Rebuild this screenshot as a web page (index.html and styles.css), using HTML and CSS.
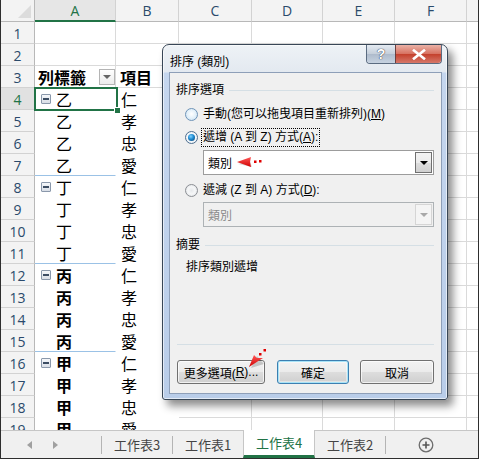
FILE: index.html
```html
<!DOCTYPE html>
<html>
<head>
<meta charset="utf-8">
<link rel="stylesheet" href="styles.css">
</head>
<body>
<div class="app">
  <div class="sheet">
    <div class="row hdr">
      <div class="c rn corner"><span class="tri"></span></div>
      <div class="c ca hsel">A</div>
      <div class="c cb">B</div>
      <div class="c cc">C</div>
      <div class="c cd">D</div>
      <div class="c ce">E</div>
      <div class="c cf">F</div>
      <div class="c cg"></div>
    </div>
    <div class="row"><div class="c rn">1</div><div class="c ca"></div><div class="c cb"></div><div class="c cc"></div><div class="c cd"></div><div class="c ce"></div><div class="c cf"></div><div class="c cg"></div></div>
    <div class="row"><div class="c rn">2</div><div class="c ca"></div><div class="c cb"></div><div class="c cc"></div><div class="c cd"></div><div class="c ce"></div><div class="c cf"></div><div class="c cg"></div></div>
    <div class="row"><div class="c rn">3</div><div class="c ca ph"><span class="pht">列標籤</span><span class="filt"><span class="ftri"></span></span></div><div class="c cb ph"><span class="pht">項目</span></div><div class="c cc"></div><div class="c cd"></div><div class="c ce"></div><div class="c cf"></div><div class="c cg"></div></div>
    <div class="row"><div class="c rn rsel">4</div><div class="c ca pv"><span class="mb"></span><span class="lbl">乙</span></div><div class="c cb pv"><span class="val">仁</span></div><div class="c cc"></div><div class="c cd"></div><div class="c ce"></div><div class="c cf"></div><div class="c cg"></div></div>
    <div class="row"><div class="c rn">5</div><div class="c ca pv"><span class="lbl">乙</span></div><div class="c cb pv"><span class="val">孝</span></div><div class="c cc"></div><div class="c cd"></div><div class="c ce"></div><div class="c cf"></div><div class="c cg"></div></div>
    <div class="row"><div class="c rn">6</div><div class="c ca pv"><span class="lbl">乙</span></div><div class="c cb pv"><span class="val">忠</span></div><div class="c cc"></div><div class="c cd"></div><div class="c ce"></div><div class="c cf"></div><div class="c cg"></div></div>
    <div class="row"><div class="c rn">7</div><div class="c ca pv gend"><span class="lbl">乙</span></div><div class="c cb pv"><span class="val">愛</span></div><div class="c cc"></div><div class="c cd"></div><div class="c ce"></div><div class="c cf"></div><div class="c cg"></div></div>
    <div class="row"><div class="c rn">8</div><div class="c ca pv"><span class="mb"></span><span class="lbl">丁</span></div><div class="c cb pv"><span class="val">仁</span></div><div class="c cc"></div><div class="c cd"></div><div class="c ce"></div><div class="c cf"></div><div class="c cg"></div></div>
    <div class="row"><div class="c rn">9</div><div class="c ca pv"><span class="lbl">丁</span></div><div class="c cb pv"><span class="val">孝</span></div><div class="c cc"></div><div class="c cd"></div><div class="c ce"></div><div class="c cf"></div><div class="c cg"></div></div>
    <div class="row"><div class="c rn">10</div><div class="c ca pv"><span class="lbl">丁</span></div><div class="c cb pv"><span class="val">忠</span></div><div class="c cc"></div><div class="c cd"></div><div class="c ce"></div><div class="c cf"></div><div class="c cg"></div></div>
    <div class="row"><div class="c rn">11</div><div class="c ca pv gend"><span class="lbl">丁</span></div><div class="c cb pv"><span class="val">愛</span></div><div class="c cc"></div><div class="c cd"></div><div class="c ce"></div><div class="c cf"></div><div class="c cg"></div></div>
    <div class="row"><div class="c rn">12</div><div class="c ca pv"><span class="mb"></span><span class="lbl b">丙</span></div><div class="c cb pv"><span class="val">仁</span></div><div class="c cc"></div><div class="c cd"></div><div class="c ce"></div><div class="c cf"></div><div class="c cg"></div></div>
    <div class="row"><div class="c rn">13</div><div class="c ca pv"><span class="lbl b">丙</span></div><div class="c cb pv"><span class="val">孝</span></div><div class="c cc"></div><div class="c cd"></div><div class="c ce"></div><div class="c cf"></div><div class="c cg"></div></div>
    <div class="row"><div class="c rn">14</div><div class="c ca pv"><span class="lbl b">丙</span></div><div class="c cb pv"><span class="val">忠</span></div><div class="c cc"></div><div class="c cd"></div><div class="c ce"></div><div class="c cf"></div><div class="c cg"></div></div>
    <div class="row"><div class="c rn">15</div><div class="c ca pv gend"><span class="lbl b">丙</span></div><div class="c cb pv"><span class="val">愛</span></div><div class="c cc"></div><div class="c cd"></div><div class="c ce"></div><div class="c cf"></div><div class="c cg"></div></div>
    <div class="row"><div class="c rn">16</div><div class="c ca pv"><span class="mb"></span><span class="lbl b">甲</span></div><div class="c cb pv"><span class="val">仁</span></div><div class="c cc"></div><div class="c cd"></div><div class="c ce"></div><div class="c cf"></div><div class="c cg"></div></div>
    <div class="row"><div class="c rn">17</div><div class="c ca pv"><span class="lbl b">甲</span></div><div class="c cb pv"><span class="val">孝</span></div><div class="c cc"></div><div class="c cd"></div><div class="c ce"></div><div class="c cf"></div><div class="c cg"></div></div>
    <div class="row"><div class="c rn">18</div><div class="c ca pv"><span class="lbl b">甲</span></div><div class="c cb pv"><span class="val">忠</span></div><div class="c cc"></div><div class="c cd"></div><div class="c ce"></div><div class="c cf"></div><div class="c cg"></div></div>
    <div class="row"><div class="c rn">19</div><div class="c ca pv"><span class="lbl b">甲</span></div><div class="c cb pv"><span class="val">愛</span></div><div class="c cc"></div><div class="c cd"></div><div class="c ce"></div><div class="c cf"></div><div class="c cg"></div></div>
    <div class="selbox"><span class="fill"></span></div>
  </div>

  <div class="tabs">
    <div class="nav">
      <span class="navl"></span>
      <span class="navr"></span>
    </div>
    <div class="tsep"></div>
    <div class="tab t3">工作表3</div>
    <div class="tsep"></div>
    <div class="tab t1">工作表1</div>
    <div class="tab active">工作表4</div>
    <div class="tab t2">工作表2</div>
    <div class="tsep"></div>
    <div class="plus">
      <svg width="16" height="16" viewBox="0 0 16 16"><circle cx="8" cy="8" r="6.8" fill="none" stroke="#6d6d6d" stroke-width="1.3"/><path d="M8 4.5v7M4.5 8h7" stroke="#555" stroke-width="1.6"/></svg>
    </div>
  </div>

  <div class="dialog">
    <div class="titlebar">
      <span class="title">排序 (類別)</span>
      <div class="tbtns">
        <span class="help">?</span>
        <span class="close"><svg width="14" height="11" viewBox="0 0 14 11"><path d="M2 1.5 L12 9.5 M12 1.5 L2 9.5" stroke="#fff" stroke-width="2.6" stroke-linecap="square"/></svg></span>
      </div>
    </div>
    <div class="client">
      <div class="grp"><span>排序選項</span><span class="gline"></span></div>
      <div class="opt o1"><span class="radio hot"></span><span class="otext">手動(您可以拖曳項目重新排列)(<u>M</u>)</span></div>
      <div class="opt o2"><span class="radio on"></span><span class="otext focus">遞增 (A 到 Z) 方式(<u>A</u>):</span></div>
      <div class="combo"><span class="ctext">類別</span><span class="cbtn"><span class="ctri"></span></span></div>
      <div class="opt o3"><span class="radio"></span><span class="otext">遞減 (Z 到 A) 方式(<u>D</u>):</span></div>
      <div class="combo dis"><span class="ctext">類別</span><span class="cbtn"><span class="ctri"></span></span></div>
      <div class="grp g2"><span>摘要</span><span class="gline"></span></div>
      <div class="summary">排序類別遞增</div>
      <div class="spacer"></div>
      <div class="bsep"></div>
      <div class="btns">
        <span class="btn bmore">更多選項(<u>R</u>)...</span>
        <span class="btn bok">確定</span>
        <span class="btn bcancel">取消</span>
      </div>
      <svg class="arrow a1" width="30" height="20" viewBox="0 0 30 20">
        <defs><linearGradient id="rg" x1="0" y1="0" x2="0" y2="1"><stop offset="0" stop-color="#ff5a5a"/><stop offset="1" stop-color="#d00000"/></linearGradient></defs>
        <path d="M4 12 L18 15 L16 9 Z" fill="#000" opacity="0.15"/>
        <path d="M3 10 L17 5 L16 10 L17 15 Z" fill="url(#rg)"/>
        <rect x="20" y="8.5" width="2.5" height="2.5" fill="#e00000"/>
        <rect x="25" y="8" width="2.5" height="2.5" fill="#e00000"/>
      </svg>
      <svg class="arrow a2" width="26" height="26" viewBox="0 0 26 26">
        <path d="M5 22 L11 10 L18 18 Z" fill="#000" opacity="0.18"/>
        <path d="M3 21 L8 9 L11 12 L17 12 Z" fill="url(#rg)"/>
        <rect x="13" y="7" width="2.5" height="2.5" fill="#e00000"/>
        <rect x="17.5" y="3" width="2.5" height="2.5" fill="#e00000"/>
      </svg>
    </div>
  </div>
</div>
</body>
</html>
```

FILE: styles.css
```css
* { box-sizing: border-box; }
html, body { margin: 0; padding: 0; }
body {
  width: 479px; height: 459px; overflow: hidden; background: #fff;
  font-family: "Liberation Sans", "Noto Sans CJK TC", sans-serif;
}
.app {
  position: relative; width: 479px; height: 459px;
  border: 1px solid #2e2e2e; border-top: none;
  display: flex; flex-direction: column; background: #fff;
}
.sheet { position: relative; height: 430px; flex: none; overflow: hidden; }
.row { display: flex; height: 22px; flex: none; }
.c {
  flex: none; height: 22px;
  border-right: 1px solid #dadada; border-bottom: 1px solid #dadada;
  display: flex; align-items: center;
}
.rn {
  width: 34px; background: #f3f3f3;
  border-right-color: #b8b8b8; border-bottom-color: #d2d2d2;
  justify-content: center; font-family: "Open Sans", "Liberation Sans", sans-serif;
  font-size: 14px; color: #2a4a6b; padding-top: 1px;
}
.ca { width: 81px; }
.cb { width: 63px; }
.cc { width: 73px; }
.cd { width: 71px; }
.ce { width: 72px; }
.cf { width: 72px; }
.cg { flex: 1; border-right: none; }
.hdr .c {
  background: #f3f3f3; border-bottom-color: #b8b8b8; border-right-color: #d2d2d2;
  justify-content: center; font-family: "Open Sans", "Liberation Sans", sans-serif;
  font-size: 14px; color: #2a4a6b;
}
.hdr .rn { border-right-color: #b8b8b8; position: relative; }
.hdr .hsel { background: #e6e6e6; color: #217346; border-bottom: 2px solid #217346; }
.rn.rsel { background: #e1e1e1; color: #217346; }
.tri {
  position: absolute; right: 3px; bottom: 3px; width: 0; height: 0;
  border-left: 13px solid transparent; border-bottom: 13px solid #dcdcdc;
}
.ph { font-family: "Noto Sans CJK TC", sans-serif; font-weight: 700; font-size: 16px; color: #000; position: relative; }
.ca.ph { padding-left: 3px; }
.cb.ph { padding-left: 4px; }
.pht { line-height: 22px; }
.filt {
  position: absolute; left: 64px; top: 3px; width: 16px; height: 16px;
  border: 1px solid #b4b4b4; background: linear-gradient(#ffffff, #ececec);
  display: flex; align-items: center; justify-content: center;
}
.ftri { width: 0; height: 0; border-left: 4px solid transparent; border-right: 4px solid transparent; border-top: 4px solid #666; }
.pv { border-color: #fff; background: #fff; font-family: "Noto Sans CJK TC", sans-serif; font-size: 16px; color: #000; }
.ca.pv { padding-left: 21px; position: relative; }
.cb.pv { padding-left: 5px; }
.gend { border-bottom-color: #9bc2e6; }
.lbl, .val { line-height: 22px; }
.lbl.b { font-weight: 700; }
.mb {
  position: absolute; left: 6px; top: 6px; width: 10px; height: 10px;
  border: 1px solid #8a98ab; border-radius: 1px;
  background: linear-gradient(#f5f7fa, #d9dee6);
}
.mb::after { content: ""; position: absolute; left: 1px; top: 3px; width: 6px; height: 2px; background: #3c4d63; }
.selbox {
  position: absolute; left: 33px; top: 87px; width: 84px; height: 24px;
  border: 2px solid #217346; pointer-events: none;
}
.fill {
  position: absolute; right: -5px; bottom: -5px; width: 7px; height: 7px;
  background: #217346; border: 1px solid #fff;
}

.tabs {
  flex: 1; display: flex; align-items: stretch; background: #f0f0f0;
  border-top: 1px solid #c6c6c6; position: relative;
  font-family: "Noto Sans CJK TC", sans-serif; font-size: 13px; color: #444;
}
.nav { width: 100px; display: flex; align-items: center; padding-left: 26px; gap: 21px; }
.navl { width: 0; height: 0; border-top: 4px solid transparent; border-bottom: 4px solid transparent; border-right: 5px solid #a0a0a0; }
.navr { width: 0; height: 0; border-top: 4px solid transparent; border-bottom: 4px solid transparent; border-left: 5px solid #a0a0a0; }
.tsep { width: 1px; background: #b4b4b4; margin: 5px 0 4px; }
.tab { display: flex; align-items: center; justify-content: center; line-height: 1; padding-bottom: 1px; }
.t3 { width: 70px; }
.t1 { width: 70px; }
.active {
  width: 72px; background: #fff; color: #217346; margin-top: -1px;
  border-left: 1px solid #c6c6c6; border-right: 1px solid #c6c6c6;
  border-bottom: 3px solid #217346; padding-bottom: 0;
}
.t2 { width: 70px; }
.plus { width: 80px; display: flex; align-items: center; justify-content: center; }

.dialog {
  position: absolute; left: 161px; top: 44px; width: 286px; height: 356px;
  border: 1px solid #384656; border-radius: 7px 7px 3px 3px;
  background: linear-gradient(180deg, #eef2f6 0px, #e3e9f0 27px, #c5d6ee 28px, #b9cde9 100%);
  padding: 0 5px 5px 6px;
  display: flex; flex-direction: column;
  box-shadow: 5px 6px 9px rgba(0,0,0,0.45), inset 0 0 0 1px rgba(255,255,255,0.6);
  font-family: "Liberation Sans", "Noto Sans CJK TC", sans-serif; font-size: 12px; color: #000;
}
.titlebar { height: 27px; flex: none; display: flex; align-items: flex-start; position: relative; }
.title { margin-top: 7px; margin-left: 1px; font-size: 12px; }
.tbtns {
  position: absolute; right: 0; top: 0; display: flex; height: 19px;
  border: 1px solid #5a6b80; border-top: none; border-radius: 0 0 4px 4px; overflow: hidden;
}
.help {
  width: 29px; background: linear-gradient(#e4eaf1, #c4ceda 50%, #aebbcc 51%, #c6d2e0);
  display: flex; align-items: center; justify-content: center;
  font: bold 14px "Liberation Sans", sans-serif; color: #fff;
  text-shadow: 0 0 1px #334, 0 0 1px #334; border-right: 1px solid #6a4040;
}
.close {
  width: 45px; background: linear-gradient(#eab1a6, #d7705f 50%, #c4402c 51%, #d6786a);
  display: flex; align-items: center; justify-content: center;
}
.client {
  flex: 1; background: #f0f0f0; border: 1px solid #8e9fb8; position: relative;
  display: flex; flex-direction: column; padding: 0 7px 9px 6px;
}
.grp { display: flex; align-items: center; height: 14px; margin-top: 10px; line-height: 14px; }
.gline { flex: 1; height: 1px; background: #d5dfe5; margin-left: 5px; }
.opt { display: flex; align-items: center; height: 18px; margin-left: 9px; }
.o1 { margin-top: 8px; }
.o2 { margin-top: 5px; }
.o3 { margin-top: 6px; }
.radio {
  width: 13px; height: 13px; border-radius: 50%; flex: none;
  border: 1px solid #8c8f94;
  background: radial-gradient(circle at 50% 50%, #e7e9ec 0, #f6f7f8 45%, #d8dbdf 100%);
  position: relative; margin-right: 4px;
}
.radio.hot { border-color: #6f94b8; background: radial-gradient(circle at 50% 45%, #ffffff 0, #e4f1fa 50%, #c3dcef 100%); }
.radio.on { border-color: #4f6f8f; background: radial-gradient(circle at 50% 50%, #e2ecf5 0, #f5f8fb 60%, #c8d6e3 100%); }
.radio.on::after {
  content: ""; position: absolute; left: 2px; top: 2px; width: 7px; height: 7px; border-radius: 50%;
  background: radial-gradient(circle at 40% 35%, #7fd1ff 0, #1d8ad1 45%, #0a3a66 100%);
}
.otext { line-height: 16px; padding: 0 1px; white-space: nowrap; }
.otext.focus { outline: 1px dotted #000; outline-offset: 0; height: 17px; }
.combo {
  height: 25px; margin-left: 27px; margin-top: 4px; flex: none;
  border: 1px solid #9c9c9c; background: #fff; display: flex; align-items: center;
  position: relative;
}
.o3 + .combo { margin-top: 3px; }
.ctext { padding-left: 4px; flex: 1; }
.cbtn {
  width: 17px; height: 21px; margin-right: 1px; border: 1px solid #707070;
  background: linear-gradient(#f2f2f2, #ebebeb 50%, #dddddd 51%, #cfcfcf);
  display: flex; align-items: center; justify-content: center;
}
.ctri { width: 0; height: 0; border-left: 4px solid transparent; border-right: 4px solid transparent; border-top: 4px solid #000; }
.combo.dis { background: #f0f0f0; border-color: #adb2b5; color: #8a8a8a; }
.combo.dis .cbtn { border-color: #d5d5d5; background: #f4f4f4; }
.combo.dis .ctri { border-top-color: #a8a8a8; }
.g2 { margin-top: 11px; }
.summary { margin-top: 8px; margin-left: 10px; line-height: 14px; }
.spacer { flex: 1; }
.bsep { height: 1px; background: #d5dfe5; margin: 0 0 15px 1px; }
.btns { display: flex; height: 24px; margin-left: 1px; }
.btn {
  height: 24px; border: 1px solid #707070; border-radius: 3px;
  background: linear-gradient(#f2f2f2, #ebebeb 50%, #dddddd 51%, #cfcfcf);
  display: flex; align-items: center; justify-content: center;
  box-shadow: inset 0 0 0 1px rgba(255,255,255,0.7);
}
.bmore { width: 88px; }
.bok { width: 72px; margin-left: 12px; border-color: #3c7fb1; box-shadow: inset 0 0 0 1px #a8e3f7, inset 0 0 0 2px rgba(255,255,255,0.4); }
.bcancel { width: 74px; margin-left: 11px; }
.arrow { position: absolute; }
.a1 { left: 64px; top: 79px; }
.a2 { left: 76px; top: 273px; }
```
